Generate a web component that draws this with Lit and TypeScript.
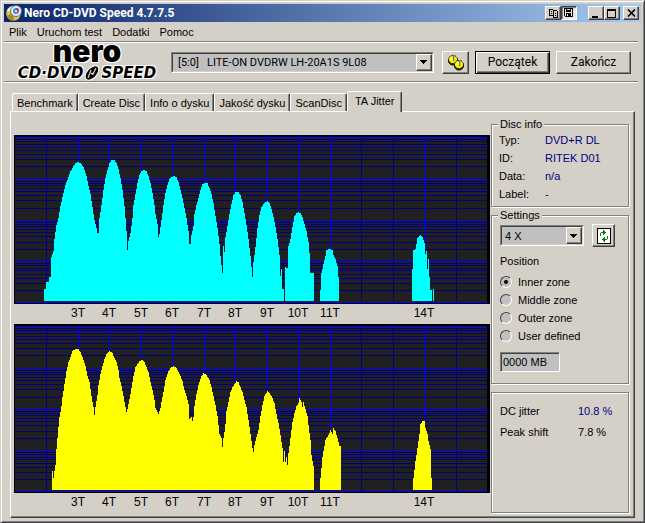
import { LitElement, html, css, svg } from "lit";
import { customElement, property } from "lit/decorators.js";
import { classMap } from "lit/directives/class-map.js";

type Point = [number, number];

// Outline of the pit/land histograms: x, height of the top edge.
const UPPER: Point[] = [
  [30,154],[32,154],[32,147],[35,147],[35,142],[37,142],[37,122],[39,116],[40,104],[42,90],[44,83],[46,71],[48,62],
  [51,50],[54,42],[56,36],[58,33],[61,28],[64,27],[66,28],[69,32],[72,41],[74,51],[76,59],[78,72],[80,85],[82,93],
  [83,98],[84,98],[85,83],[87,70],[89,55],[91,43],[93,35],[95,28],[97,25],[100,25],[102,28],[104,34],[106,43],
  [108,55],[110,71],[111,83],[112,96],[113,115],[114,106],[116,98],[118,83],[119,70],[121,59],[123,48],[125,40],
  [127,36],[129,35],[132,36],[134,41],[136,48],[138,58],[140,70],[141,79],[143,89],[144,102],[145,99],[147,85],
  [149,70],[151,58],[153,50],[155,44],[157,42],[159,41],[162,42],[164,47],[166,55],[168,63],[170,73],[172,83],
  [174,96],[175,109],[176,109],[177,100],[179,91],[180,79],[182,70],[184,63],[186,55],[188,49],[190,48],[193,48],
  [195,53],[197,59],[199,68],[201,81],[203,93],[205,109],[206,121],[208,138],[209,111],[210,117],[211,102],
  [213,91],[215,79],[217,69],[219,60],[221,57],[224,57],[226,60],[228,67],[230,78],[232,90],[234,104],[236,121],
  [238,142],[239,127],[241,112],[243,93],[245,80],[247,72],[250,68],[253,66],[255,68],[257,74],[259,82],[261,92],
  [263,104],[265,120],[266,141],[267,134],[268,154],[270,154],[270,166],[271,166],[271,132],[273,133],[274,111],
  [276,104],[278,92],[280,81],[282,78],[284,77],[286,78],[288,82],[290,89],[292,96],[294,107],[295,118],[296,138],
  [300,138],[300,166],[306,166],[306,155],[307,138],[309,129],[311,121],[312,115],[315,114],[318,115],[319,120],
  [321,124],[323,131],[324,142],[325,166],[398,166],[398,134],[399,115],[401,114],[403,103],[405,101],[406,100],
  [408,102],[410,108],[411,119],[412,116],[413,134],[414,124],[415,142],[416,155],[418,155],[418,166],[419,166],
  [419,154],[420,154],[420,166],
];

const LOWER: Point[] = [
  [38,147],[39,154],[40,147],[41,141],[42,125],[43,114],[44,103],[45,93],[47,82],[48,73],[50,60],[52,47],[54,38],
  [56,33],[58,27],[61,25],[64,25],[66,28],[68,33],[71,42],[73,52],[75,58],[77,72],[79,83],[80,91],[81,83],[83,71],
  [84,61],[86,50],[88,42],[90,35],[92,30],[95,27],[98,29],[100,34],[102,38],[104,46],[105,54],[107,62],[109,72],
  [111,83],[112,88],[113,85],[115,75],[117,64],[119,52],[121,43],[123,40],[125,37],[128,36],[130,38],[132,43],
  [134,48],[136,58],[138,66],[140,76],[141,84],[144,90],[146,84],[147,78],[149,68],[151,56],[154,47],[157,43],
  [159,42],[162,44],[165,50],[168,57],[170,66],[172,72],[174,80],[175,95],[177,93],[178,97],[179,93],[180,82],
  [182,70],[184,61],[187,52],[189,49],[192,51],[195,56],[197,63],[199,72],[201,81],[203,92],[205,110],[207,114],
  [208,123],[209,114],[210,108],[211,100],[212,87],[214,78],[216,68],[218,63],[220,60],[222,57],[224,58],[226,63],
  [228,68],[230,76],[232,83],[234,96],[236,110],[238,124],[239,128],[240,121],[242,113],[244,106],[246,92],
  [248,81],[250,72],[253,67],[255,69],[258,74],[260,79],[262,90],[264,99],[266,111],[268,124],[269,138],[270,127],
  [271,138],[272,133],[273,141],[274,129],[276,114],[278,98],[280,89],[282,82],[284,79],[285,74],[287,78],[288,83],
  [289,78],[291,85],[293,92],[294,101],[296,116],[297,131],[299,142],[300,142],[300,166],[306,166],[306,154],
  [308,133],[311,116],[314,111],[316,106],[318,110],[319,104],[321,107],[323,114],[325,122],[327,122],[327,166],
  [399,166],[399,154],[401,137],[403,124],[405,110],[406,100],[408,97],[410,97],[411,104],[413,110],[414,117],
  [416,125],[417,154],[418,154],[418,166],
];

const PEAKS = [
  { x: 64, label: "3T" }, { x: 95, label: "4T" }, { x: 127, label: "5T" }, { x: 158, label: "6T" },
  { x: 190, label: "7T" }, { x: 221, label: "8T" }, { x: 253, label: "9T" }, { x: 284, label: "10T" },
  { x: 316, label: "11T" }, { x: 410, label: "14T" },
];
const PLAIN_COLUMNS = [32, 347, 379, 442];
const BASE = 166;

/** Turns the outline into one-pixel columns, with flat steps instead of slopes. */
function columns(points: Point[]): string {
  const first = points[0][0];
  const last = points[points.length - 1][0];
  let d = `M${first} ${BASE}`;
  let i = 0;
  for (let x = first; x < last; x++) {
    while (i < points.length - 2 && points[i + 1][0] <= x) i++;
    const [x0, y0] = points[i];
    const [x1, y1] = points[i + 1];
    const y = x1 === x0 ? y1 : Math.round(y0 + ((y1 - y0) * (x - x0)) / (x1 - x0));
    d += `V${y}H${x + 1}`;
  }
  return `${d}V${BASE}Z`;
}

@customElement("jitter-chart")
export class JitterChart extends LitElement {
  @property({ attribute: false }) points: Point[] = [];
  @property() tone = "upper";
  @property() name = "";

  static styles = css`
    :host { display: block; }
    .plot { display: block; width: 100%; height: auto; }
    .frame { fill: #000; }
    .field { fill: #202020; }
    .minor { fill: #000080; }
    .major { fill: #0000ff; }
    .upper { fill: #00ffff; }
    .lower { fill: #ffff00; }
    .tick { font: 12px "Liberation Sans", Arial, sans-serif; fill: #000; text-anchor: middle; }
  `;

  render() {
    const minor: number[] = [];
    const major: number[] = [];
    for (let decade = 0; decade <= 4; decade++) {
      const base = 167.45 - 41.25 * decade;
      major.push(Math.round(base));
      if (decade === 4) break;
      for (let k = 2; k < 10; k++) minor.push(Math.round(base - 41.25 * Math.log10(k)));
    }
    return html`
      <svg class="plot" viewBox="0 0 476 189" role="img" aria-label=${this.name} shape-rendering="crispEdges">
        <rect class="frame" width="476" height="169" />
        <rect class="field" x="1" y="2" width="472" height="165" />
        ${minor.map((y) => svg`<rect class="minor" x="1" y=${y} width="472" height="1" />`)}
        ${PLAIN_COLUMNS.map((x) => svg`<rect class="minor" x=${x} y="2" width="1" height="165" />`)}
        ${PEAKS.map(({ x }) => svg`<rect class="major" x=${x} y="2" width="1" height="165" />`)}
        ${major.map((y) => svg`<rect class="major" x="1" y=${y} width="472" height="1" />`)}
        <path class=${this.tone} d=${columns(this.points)} />
        ${PEAKS.map(({ x, label }) => svg`<text class="tick" x=${x} y="182">${label}</text>`)}
      </svg>
    `;
  }
}

@customElement("app-root")
export class AppRoot extends LitElement {
  private menus = ["Plik", "Uruchom test", "Dodatki", "Pomoc"];
  private tabs = ["Benchmark", "Create Disc", "Info o dysku", "Jakość dysku", "ScanDisc", "TA Jitter"];
  private zones = ["Inner zone", "Middle zone", "Outer zone", "User defined"];
  private info = [["Typ:", "DVD+R DL"], ["ID:", "RITEK D01"], ["Data:", "n/a"], ["Label:", "-"]];

  static styles = css`
    * { box-sizing: border-box; }
    :host { display: block; font: 11px/18px "Liberation Sans", Arial, sans-serif; color: #000; }
    button, select, input { font: inherit; color: inherit; margin: 0; padding: 0; border-radius: 0; }
    .window {
      display: flex; flex-direction: column; min-height: 100vh; padding: 3px; background: #d4d0c8;
      border: 1px solid; border-color: #d4d0c8 #404040 #404040 #d4d0c8;
      box-shadow: inset 1px 1px #fff, inset -1px -1px #808080;
    }
    .title {
      display: flex; align-items: center; height: 18px; padding: 0 2px;
      background: linear-gradient(90deg, #0a246a, #a6caf0);
    }
    .disc { width: 16px; height: 16px; margin-right: 2px; }
    .caption { flex: 1; margin: 0; font: bold 12px/18px Roboto, "Liberation Sans", sans-serif; color: #fff; }
    .group { display: flex; margin-left: 11px; }
    .group.close { margin-left: 3px; }
    .raised, .mini {
      display: grid; place-items: center; background: #d4d0c8; border: 1px solid; border-color: #fff #404040 #404040 #fff;
      box-shadow: inset -1px -1px #808080;
    }
    .mini { width: 16px; height: 14px; }
    .mini.down { background: #ebe8e3; border-color: #404040 #fff #fff #404040; box-shadow: inset 1px 1px #808080; }
    .glyph { display: block; }
    .menu { display: flex; height: 20px; align-items: center; margin-right: 3px; border-bottom: 1px solid #808080; }
    .item { border: 0; background: none; padding: 0 5px; }
    .bar {
      display: flex; align-items: center; height: 40px; margin-right: 3px; padding-right: 7px;
      border-top: 1px solid #fff; border-bottom: 1px solid #808080; box-shadow: 0 1px #fff;
    }
    .logo {
      display: grid; justify-items: center; gap: 7px; width: 146px; margin: 0 11px 0 10px;
      text-shadow: 1px 1px #fff, -1px -1px #fff, 1px -1px #fff, -1px 1px #fff;
    }
    .brand { font: 900 30px/14px Inter, "DejaVu Sans", sans-serif; }
    .product { display: flex; align-items: center; font: italic bold 15px/16px "DejaVu Sans", sans-serif; }
    .combo { display: grid; flex: 1; border: 1px solid; border-color: #808080 #fff #fff #808080; }
    .pick {
      grid-area: 1 / 1; appearance: none; width: 100%; height: 19px; padding-left: 3px; border: 1px solid;
      border-color: #404040 #d4d0c8 #d4d0c8 #404040; background: #c0c0c0;
    }
    .drive { padding-left: 5px; font-family: Roboto, "Liberation Sans", sans-serif; }
    .arrow { grid-area: 1 / 1; justify-self: end; width: 16px; margin: 1px; pointer-events: none; }
    .push { height: 23px; }
    .gear { width: 27px; margin: 0 6px 0 8px; }
    .wide { width: 75px; font: 12px Roboto, "Liberation Sans", sans-serif; }
    .wide.default { margin-right: 6px; border-color: #000; box-shadow: inset 1px 1px #fff, inset -1px -1px #404040, inset -2px -2px #808080; }
    .tabs { display: flex; align-items: flex-end; height: 29px; padding-left: 8px; }
    .tab {
      height: 18px; padding: 0 4px; background: #d4d0c8; border: 1px solid; border-bottom: 0;
      border-color: #fff #404040 #fff #fff; border-radius: 2px 2px 0 0; box-shadow: inset -1px 0 #808080;
    }
    .tab.on { height: 21px; padding: 0 7px 3px; margin-bottom: -1px; z-index: 1; }
    .panel {
      flex: 1; display: grid; grid-template-columns: minmax(0, 1fr) 140px; gap: 1px; margin: 0 6px 1px; padding: 0 3px 3px;
      border: 1px solid; border-color: #fff #404040 #404040 #fff; box-shadow: inset -1px -1px #808080;
    }
    .charts { padding-top: 23px; }
    .side { display: flex; flex-direction: column; gap: 8px; padding: 12px 2px 1px 0; }
    .box {
      position: relative; margin: 0; min-width: 0; border: 1px solid #808080; padding: 8px 8px 11px;
      box-shadow: inset 1px 1px #fff, 1px 1px #fff;
    }
    .box.info { padding: 6px 7px 3px; }
    .box.stats { flex: 1; }
    .legend { position: absolute; top: -8px; left: 6px; padding: 0 2px; line-height: 14px; background: #d4d0c8; }
    .pairs { display: grid; grid-template-columns: 46px 1fr; margin: 0; }
    .stats .pairs { grid-template-columns: 78px 1fr; line-height: 21px; }
    .pairs dd { margin: 0; }
    .blue { color: #000080; }
    .row { display: flex; align-items: center; gap: 8px; }
    .row .combo { flex: 0 0 84px; }
    .refresh { width: 23px; }
    .zones { margin: 5px 0 7px; padding: 0; border: 0; }
    .zones legend { padding: 0; margin-bottom: 3px; }
    .zone { display: flex; align-items: center; gap: 6px; height: 18px; }
    .dot {
      appearance: none; display: grid; place-items: center; width: 12px; height: 12px; border-radius: 6px;
      background: #c0c0c0; border: 1px solid; border-color: #404040 #fff #fff #404040;
    }
    .dot:checked::before { content: ""; width: 4px; height: 4px; border-radius: 2px; background: #000; }
    .size {
      display: block; width: 60px; height: 20px; padding: 0 2px; background: #c0c0c0;
      border: 1px solid; border-color: #808080 #fff #fff #808080; box-shadow: inset 1px 1px #404040;
    }
  `;

  private arrow() {
    return html`<span class="arrow raised" aria-hidden="true">
      <svg class="glyph" width="8" height="4" shape-rendering="crispEdges"><path d="M0 0h7v1h-1v1h-1v1h-1v1h-1v-1h-1v-1h-1v-1h-1z" /></svg>
    </span>`;
  }

  render() {
    return html`
      <main class="window">
        <header class="title">
          <svg class="disc" viewBox="0 0 16 16" aria-hidden="true">
            <circle cx="7.5" cy="8.5" r="7.3" fill="#d9c04a" />
            <path d="M1 6a7 7 0 0 1 6-5l1 6z" fill="#fff6b0" />
            <path d="M1 11l6-3 1 7.500a7 7 0 0 1-7-4.500z" fill="#a88b20" />
            <circle cx="10" cy="6" r="5.500" fill="#e8eef4" stroke="#5577a0" />
            <circle cx="10" cy="6" r="3" fill="#4a86c8" />
            <path d="M10 3a3 3 0 0 1 3 3h-3z" fill="#d03020" />
            <circle cx="10" cy="6" r="1" fill="#fff" />
          </svg>
          <h1 class="caption">Nero CD-DVD Speed 4.7.7.5</h1>
          <div class="group">
            <button class="mini" aria-label="Copy">
              <svg class="glyph" width="11" height="10" shape-rendering="crispEdges" fill="#d4d0c8" stroke="#000">
                <path d="M1.500 1.500h3l1 1v5h-4zM5.500 2.500h3l1 1v6h-4z" /><path d="M3 3.500h1M3 5.500h1M7 5.500h1M7 7.500h1" />
              </svg>
            </button>
            <button class="mini down" aria-label="Save">
              <svg class="glyph" width="10" height="10" shape-rendering="crispEdges">
                <path fill-rule="evenodd" d="M0 0h9v9h-8l-1-1zM1 1v7h1v-3h5v3h1v-7h-1v3h-5v-3z" />
                <path d="M3 1h3v1h-3zM3 6h1v2h-1z" fill="#ebe8e3" />
              </svg>
            </button>
          </div>
          <div class="group">
            <button class="mini" aria-label="Minimize">
              <svg class="glyph" width="10" height="9" shape-rendering="crispEdges"><path d="M1 7h6v2h-6z" /></svg>
            </button>
            <button class="mini" aria-label="Maximize">
              <svg class="glyph" width="10" height="9" shape-rendering="crispEdges"><path fill-rule="evenodd" d="M0 0h9v9h-9zM1 2v6h7v-6z" /></svg>
            </button>
          </div>
          <div class="group close">
            <button class="mini" aria-label="Close">
              <svg class="glyph" width="9" height="8"><path d="M1 .5l7 7M8 .5l-7 7" stroke="#000" stroke-width="1.600" /></svg>
            </button>
          </div>
        </header>

        <nav class="menu">${this.menus.map((m) => html`<button class="item">${m}</button>`)}</nav>

        <section class="bar">
          <div class="logo">
            <span class="brand">nero</span>
            <span class="product">CD·DVD
              <svg class="glyph" width="18" height="16" viewBox="0 0 18 16" aria-hidden="true">
                <ellipse cx="9" cy="8" rx="8.500" ry="5" transform="rotate(-48 9 8)" stroke="#fff" />
                <path d="M5 13L8 5M9.500 10L13 3M8 8.500h3" stroke="#d4d0c8" stroke-width="1.300" fill="none" />
              </svg>
              SPEED</span>
          </div>
          <div class="combo">
            <select class="pick drive" aria-label="Drive"><option>[5:0]&nbsp;&nbsp; LITE-ON DVDRW LH-20A1S 9L08</option></select>
            ${this.arrow()}
          </div>
          <button class="raised push gear" aria-label="Options">
            <svg class="glyph" width="18" height="17" viewBox="0 0 18 17" aria-hidden="true">
              <g stroke="#000">
                <ellipse cx="6" cy="7" rx="4.500" ry="4" fill="#504800" />
                <ellipse cx="6" cy="5.500" rx="4.500" ry="4" fill="#fff000" stroke-dasharray="2 1" />
                <ellipse cx="12" cy="12" rx="4.500" ry="4" fill="#504800" />
                <ellipse cx="12" cy="10.500" rx="4.500" ry="4" fill="#fff000" stroke-dasharray="2 1" />
              </g>
              <path d="M6.500 2v5M12.500 7v5" stroke="#707088" stroke-width="1.500" />
              <path d="M5 3v3M11 8v3" stroke="#fff" />
            </svg>
          </button>
          <button class="raised push wide default">Początek</button>
          <button class="raised push wide">Zakończ</button>
        </section>

        <div class="tabs" role="tablist">
          ${this.tabs.map((t, i) => {
            const on = i === this.tabs.length - 1;
            return html`<button class=${classMap({ tab: true, on })} role="tab" aria-selected=${on}>${t}</button>`;
          })}
        </div>

        <section class="panel">
          <div class="charts">
            <jitter-chart .points=${UPPER} tone="upper" name="Pit jitter"></jitter-chart>
            <jitter-chart .points=${LOWER} tone="lower" name="Land jitter"></jitter-chart>
          </div>
          <div class="side">
            <fieldset class="box info">
              <legend class="legend">Disc info</legend>
              <dl class="pairs">${this.info.map(([k, v]) => html`<dt>${k}</dt><dd class="blue">${v}</dd>`)}</dl>
            </fieldset>
            <fieldset class="box">
              <legend class="legend">Settings</legend>
              <div class="row">
                <div class="combo">
                  <select class="pick" aria-label="Speed"><option>4 X</option></select>
                  ${this.arrow()}
                </div>
                <button class="raised push refresh" aria-label="Refresh">
                  <svg class="glyph" width="14" height="16" shape-rendering="crispEdges" aria-hidden="true">
                    <rect x=".5" y=".5" width="13" height="15" fill="#fff" stroke="#000" />
                    <path d="M3 8v-3h1v-1h2v-2h1v1h1v1h1v1h-1v1h-1v1h-1v-2h-2v3zM11 8v3h-1v1h-2v2h-1v-1h-1v-1h-1v-1h1v-1h1v-1h1v2h2v-3z" fill="#008000" />
                  </svg>
                </button>
              </div>
              <fieldset class="zones">
                <legend>Position</legend>
                ${this.zones.map((z, i) => html`<label class="zone"><input class="dot" type="radio" name="zone" ?checked=${i === 0} />${z}</label>`)}
              </fieldset>
              <input class="size" type="text" aria-label="Position in MB" value="0000 MB" />
            </fieldset>
            <section class="box stats">
              <dl class="pairs">
                <dt>DC jitter</dt><dd class="blue">10.8 %</dd>
                <dt>Peak shift</dt><dd>7.8 %</dd>
              </dl>
            </section>
          </div>
        </section>
      </main>
    `;
  }
}
